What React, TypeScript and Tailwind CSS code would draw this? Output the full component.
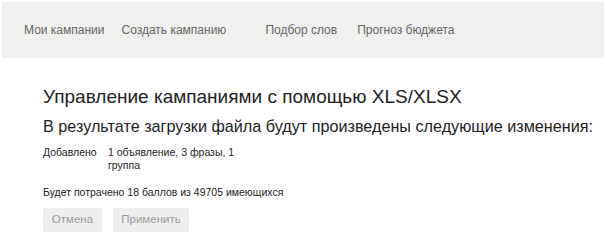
export default function App() {
  return (
    <div className="min-h-screen w-full bg-white px-[2px] pt-[2px] font-['Liberation_Sans',Arial,sans-serif]">
      {/* Top navigation */}
      <div className="flex h-[56px] items-center bg-[#f0f0ef] pl-[22px] text-[12px] text-[#666666]">
        <span>Мои кампании</span>
        <span className="ml-[17px]">Создать кампанию</span>
        <span className="ml-[39px]">Подбор слов</span>
        <span className="ml-[20px]">Прогноз бюджета</span>
      </div>

      {/* Content */}
      <div className="pl-[41px] pt-[28px] text-[#222]">
        <h1 className="text-[19px] leading-[22px]">Управление кампаниями с помощью XLS/XLSX</h1>
        <h2 className="mt-[8px] text-[16.2px] leading-[20px]">
          В результате загрузки файла будут произведены следующие изменения:
        </h2>

        <div className="mt-[10px] flex text-[10.5px] leading-[13px]">
          <div className="w-[65px]">Добавлено</div>
          <div className="w-[145px]">1 объявление, 3 фразы, 1 группа</div>
        </div>

        <div className="mt-[14px] text-[10.5px] leading-[13px]">
          Будет потрачено 18 баллов из 49705 имеющихся
        </div>

        <div className="mt-[9px] flex gap-[11px]">
          <button className="h-[24px] w-[59px] rounded-[3px] bg-[#eeeeee] text-[11.5px] text-[#9a9a9a]">
            Отмена
          </button>
          <button className="h-[24px] w-[76px] rounded-[3px] bg-[#eeeeee] text-[11.5px] text-[#9a9a9a]">
            Применить
          </button>
        </div>
      </div>
    </div>
  )
}
